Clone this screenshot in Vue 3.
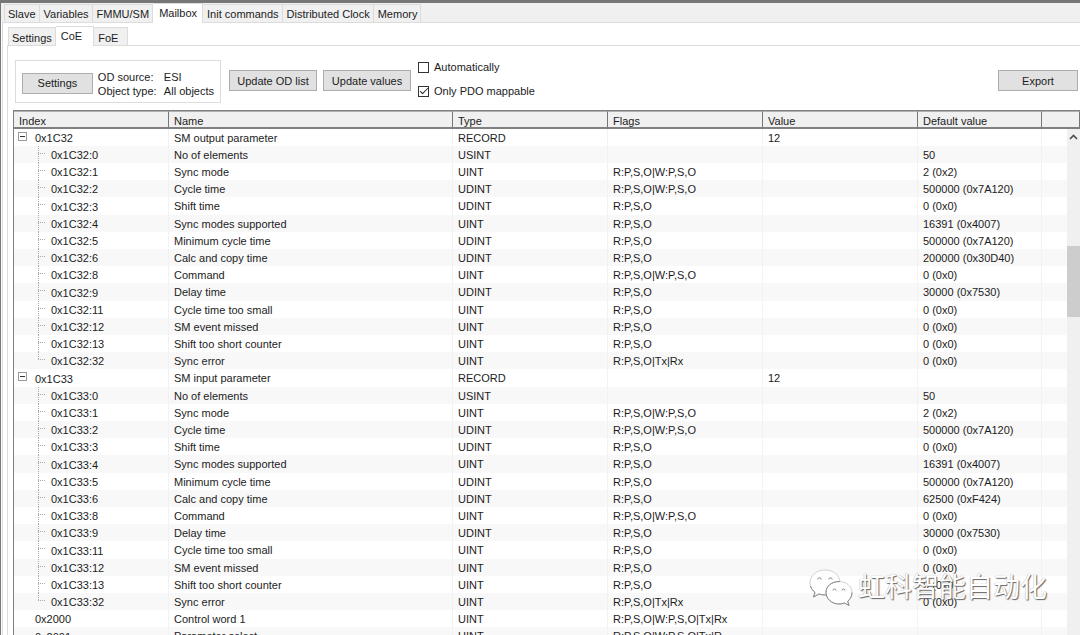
<script setup>
import { ref } from 'vue'

const mainTabs = ['Slave', 'Variables', 'FMMU/SM', 'Mailbox', 'Init commands', 'Distributed Clock', 'Memory']
const subTabs = ['Settings', 'CoE', 'FoE']
const mainTab = ref('Mailbox')
const subTab = ref('CoE')
const automatically = ref(false)
const onlyPdo = ref(true)

const columns = ['Index', 'Name', 'Type', 'Flags', 'Value', 'Default value', '']

const R = 'R:P,S,O'
const RW = 'R:P,S,O|W:P,S,O'

function syncManager(index, name, copyTime) {
  const entries = [
    ['0', 'No of elements', 'USINT', '', '50'],
    ['1', 'Sync mode', 'UINT', RW, '2 (0x2)'],
    ['2', 'Cycle time', 'UDINT', RW, '500000 (0x7A120)'],
    ['3', 'Shift time', 'UDINT', R, '0 (0x0)'],
    ['4', 'Sync modes supported', 'UINT', R, '16391 (0x4007)'],
    ['5', 'Minimum cycle time', 'UDINT', R, '500000 (0x7A120)'],
    ['6', 'Calc and copy time', 'UDINT', R, copyTime],
    ['8', 'Command', 'UINT', RW, '0 (0x0)'],
    ['9', 'Delay time', 'UDINT', R, '30000 (0x7530)'],
    ['11', 'Cycle time too small', 'UINT', R, '0 (0x0)'],
    ['12', 'SM event missed', 'UINT', R, '0 (0x0)'],
    ['13', 'Shift too short counter', 'UINT', R, '0 (0x0)'],
    ['32', 'Sync error', 'UINT', R + '|Tx|Rx', '0 (0x0)']
  ]
  return [
    { index, name, type: 'RECORD', flags: '', value: '12', def: '', kind: 'parent' },
    ...entries.map(([sub, n, type, flags, def], i) => ({
      index: `${index}:${sub}`, name: n, type, flags, value: '', def,
      kind: i === entries.length - 1 ? 'child last' : 'child'
    }))
  ]
}

const rows = [
  ...syncManager('0x1C32', 'SM output parameter', '200000 (0x30D40)'),
  ...syncManager('0x1C33', 'SM input parameter', '62500 (0xF424)'),
  { index: '0x2000', name: 'Control word 1', type: 'UINT', flags: RW + '|Tx|Rx', value: '', def: '', kind: 'leaf' },
  { index: '0x2001', name: 'Parameter select', type: 'UINT', flags: RW + '|Tx|R', value: '', def: '', kind: 'leaf' }
]
</script>

<template>
  <main class="window">
    <nav class="tabs main-tabs">
      <button v-for="t in mainTabs" :key="t" class="tab" :class="{ active: t === mainTab }" @click="mainTab = t">{{ t }}</button>
    </nav>
    <section class="page">
      <nav class="tabs sub-tabs">
        <button v-for="t in subTabs" :key="t" class="tab" :class="{ active: t === subTab }" @click="subTab = t">{{ t }}</button>
      </nav>
      <section class="panel">
        <div class="toolbar">
          <div class="source">
            <button class="btn">Settings</button>
            <dl>
              <dt>OD source:</dt><dd>ESI</dd>
              <dt>Object type:</dt><dd>All objects</dd>
            </dl>
          </div>
          <button class="btn wide">Update OD list</button>
          <button class="btn wide">Update values</button>
          <div class="checks">
            <label><input v-model="automatically" type="checkbox">Automatically</label>
            <label><input v-model="onlyPdo" type="checkbox">Only PDO mappable</label>
          </div>
          <button class="btn export">Export</button>
        </div>
        <div class="grid">
          <table>
            <colgroup>
              <col class="c-index"><col class="c-name"><col class="c-mid"><col class="c-mid"><col class="c-mid"><col class="c-def"><col>
            </colgroup>
            <thead>
              <tr><th v-for="c in columns" :key="c">{{ c }}</th></tr>
            </thead>
            <tbody>
              <tr v-for="r in rows" :key="r.index">
                <td class="index" :class="r.kind">
                  <button v-if="r.kind === 'parent'" class="toggle" aria-label="Collapse"></button>{{ r.index }}
                </td>
                <td>{{ r.name }}</td>
                <td>{{ r.type }}</td>
                <td>{{ r.flags }}</td>
                <td>{{ r.value }}</td>
                <td>{{ r.def }}</td>
                <td></td>
              </tr>
            </tbody>
          </table>
          <div class="scrollbar">
            <button class="up" aria-label="Scroll up">
              <svg width="9" height="6" viewBox="0 0 9 6"><path d="M1 5 4.500 1.500 8 5" fill="none" stroke="#505050" stroke-width="1.700" /></svg>
            </button>
            <div class="thumb"></div>
          </div>
        </div>
      </section>
    </section>
    <div class="watermark">
      <svg width="44" height="38" viewBox="0 0 44 38">
        <g fill="#fff" stroke="#d0d0d0">
          <path d="M16 1C7 1 1 7 1 14c0 4 2 7 5 9.500L4.500 28l5.500-3c2 .7 4 1 6.500 1C25 26 31 20 31 13.500S25 1 16 1Z" />
          <path d="M1.500 17c.7 2.700 2.300 4.700 4.500 6.500L4.500 28l5.500-3c2 .7 4 1 7 1" fill="none" stroke="#888" />
          <path d="M30 12.500c-8 0-13 5-13 11s5.500 11.500 13 11.500c2 0 3.800-.3 5.500-1l4.500 2.500-1.300-4.300C41.500 30 43 27 43 23.500c0-6-5.500-11-13-11Z" />
          <path d="M31 12.500c-9 0-14 5-14 11s5.500 11.500 13 11.500c2 0 3.800-.3 5.500-1l4.500 2.500-1.300-4.300C41.500 30 43 27 43 23.500" fill="none" stroke="#888" />
        </g>
        <g fill="none" stroke="#888"><path d="M8.800 10.500a1.700 1.700 0 1 1 3.400 0M19.800 10.500a1.700 1.700 0 1 1 3.400 0M24 21.500a1.500 1.500 0 1 1 3 0M33 21.500a1.500 1.500 0 1 1 3 0" /></g>
      </svg>
      <span>虹科智能自动化</span>
    </div>
  </main>
</template>

<style>
html, body { margin: 0; overflow: hidden; }
</style>

<style scoped>
* { box-sizing: border-box; }
button { font: inherit; color: inherit; padding: 0; margin: 0; }
.window {
  position: relative;
  height: 100vh;
  overflow: hidden;
  display: flex;
  flex-direction: column;
  border-top: 3px solid #777;
  border-left: 1px solid #777;
  background: #fff;
  color: #1c1c1c;
  font: 11px/14px "Liberation Sans", Arial, sans-serif;
}
.tabs { display: flex; align-items: flex-end; padding-left: 3px; height: 19px; }
.main-tabs { background: #f0f0f0; }
.tab {
  height: 18px;
  padding: 1px 3px 0 4px;
  border: 1px solid #dcdcdc;
  border-width: 1px 1px 0 0;
  background: #f0f0f0;
  white-space: nowrap;
}
.tab:first-child { border-left-width: 1px; padding: 1px 3px 0; }
.tab.active { height: 20px; padding: 0 5px 2px 6px; background: #fff; margin-bottom: -1px; position: relative; }
.page { flex: 1; min-height: 0; display: flex; flex-direction: column; margin-left: 1px; border: 1px solid #dcdcdc; border-width: 1px 0 0 1px; padding: 3px 0 0 4px; }
.sub-tabs { padding-left: 1px; }
.sub-tabs .tab { padding-top: 3px; }
.sub-tabs .tab.active { padding: 1px 11px 2px 5px; }
.sub-tabs .tab:last-child { padding-right: 9px; }
.panel { flex: 1; min-height: 0; display: flex; flex-direction: column; border: 1px solid #dcdcdc; border-width: 1px 0 0 1px; padding-left: 5px; }
.toolbar { display: flex; align-items: flex-start; padding: 14px 2px 0; height: 64px; }
.source { display: flex; align-items: center; gap: 5px; width: 206px; height: 43px; padding: 3px 6px 0; border: 1px solid #dcdcdc; }
dl { display: grid; grid-template-columns: 66px auto; margin: 2px 0 0; white-space: nowrap; }
dd { margin: 0; }
.btn { width: 71px; height: 21px; border: 1px solid #adadad; background: #e1e1e1; }
.wide { width: 88px; margin: 10px 0 0 6px; }
.source + .wide { margin-left: 8px; }
.export { width: 80px; margin: 10px 0 0 auto; }
.checks { display: flex; flex-direction: column; gap: 10px; margin: 0 0 0 7px; }
label { display: flex; align-items: center; gap: 5px; }
input { appearance: none; width: 11px; height: 11px; margin: 0; border: 1px solid #333; background: #fff; display: grid; place-items: center; }
input:checked::before { content: ""; width: 7px; height: 3px; border: 1px solid #222; border-width: 0 0 1px 1px; transform: translateY(-1px) rotate(-45deg); }
.grid { position: relative; flex: 1; min-height: 0; overflow: hidden; border: 1px solid #808080; border-width: 1px 0 0 1px; }
table { width: 100%; table-layout: fixed; border-collapse: separate; border-spacing: 0; }
.c-index { width: 155px; }
.c-name { width: 284px; }
.c-mid { width: 155px; }
.c-def { width: 124px; }
th { height: 18px; padding: 3px 0 0 5px; line-height: 12px; text-align: left; font-weight: 400; background: #f0f0f0; border-right: 1px solid #777; border-bottom: 2px solid #808080; border-top: 1px solid #b0b0b0; }
td { height: 17px; padding: 0 0 0 5px; line-height: 16px; border-right: 1px solid #f2f2f2; white-space: nowrap; }
tr:nth-child(5n) td { height: 18px; }
tbody tr:nth-child(even) { background: #f8f8f8; }
.index { padding: 1px 0 0 21px; position: relative; background-repeat: no-repeat; }
.index.child {
  padding-left: 37px;
  background-image: repeating-linear-gradient(#aaa 0 1px, transparent 1px 2px), repeating-linear-gradient(90deg, #aaa 0 1px, transparent 1px 2px);
  background-size: 1px 100%, 8px 1px;
  background-position: 24px 0, 24px 7px;
}
.index.last { background-size: 1px 8px, 8px 1px; }
.toggle { position: absolute; left: 4px; top: 3px; width: 9px; height: 9px; border: 1px solid #999; background: linear-gradient(#333, #333) center / 5px 1px no-repeat #fff; }
.scrollbar { position: absolute; right: 0; top: 18px; bottom: 0; width: 13px; background: #f0f0f0; display: flex; flex-direction: column; }
.up { height: 16px; border: 0; background: none; display: grid; place-items: center; }
.thumb { height: 71px; margin-top: 101px; background: #cdcdcd; }
.watermark { position: absolute; right: 33px; bottom: 28px; display: flex; align-items: center; gap: 5px; color: #fff; font: 27px/38px "Liberation Sans", "Noto Sans CJK SC", sans-serif; text-shadow: 1px 1px 1px #666, 0 0 1px #999; pointer-events: none; }
</style>
